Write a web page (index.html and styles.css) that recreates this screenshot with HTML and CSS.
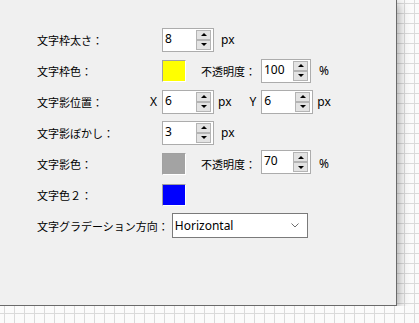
FILE: index.html
```html
<!DOCTYPE html>
<html lang="ja">

<head>
    <meta charset="UTF-8">
    <meta name="viewport" content="width=device-width, initial-scale=1.0">
    <title>文字設定</title>

    <link rel="stylesheet" href="styles.css">
</head>

<body>
    <div class="window">
        <div class="form">
            <div class="row">
                <span class="lbl">文字枠太さ：</span>
                <span class="axis"></span>
                <div class="spin"><span class="val">8</span><span class="btns"><i class="up"></i><i class="down"></i></span></div>
                <span class="unit">px</span>
            </div>

            <div class="row">
                <span class="lbl">文字枠色：</span>
                <span class="axis"></span>
                <span class="swatch yellow"></span>
                <span class="lbl2">不透明度：</span>
                <div class="spin narrow"><span class="val">100</span><span class="btns"><i class="up"></i><i class="down"></i></span></div>
                <span class="unit pct">%</span>
            </div>

            <div class="row">
                <span class="lbl">文字影位置：</span>
                <span class="axis">X</span>
                <div class="spin"><span class="val">6</span><span class="btns"><i class="up"></i><i class="down"></i></span></div>
                <span class="unit tight">px</span>
                <span class="axis-y">Y</span>
                <div class="spin"><span class="val">6</span><span class="btns"><i class="up"></i><i class="down"></i></span></div>
                <span class="unit tight">px</span>
            </div>

            <div class="row">
                <span class="lbl">文字影ぼかし：</span>
                <span class="axis"></span>
                <div class="spin"><span class="val">3</span><span class="btns"><i class="up"></i><i class="down"></i></span></div>
                <span class="unit">px</span>
            </div>

            <div class="row">
                <span class="lbl">文字影色：</span>
                <span class="axis"></span>
                <span class="swatch gray"></span>
                <span class="lbl2">不透明度：</span>
                <div class="spin narrow up2"><span class="val">70</span><span class="btns"><i class="up"></i><i class="down"></i></span></div>
                <span class="unit pct">%</span>
            </div>

            <div class="row">
                <span class="lbl">文字色２：</span>
                <span class="axis"></span>
                <span class="swatch blue"></span>
            </div>

            <div class="row">
                <span class="lbl auto">文字グラデーション方向：</span>
                <div class="select">
                    <span>Horizontal</span>
                    <svg width="8" height="5" viewBox="0 0 8 5"><polyline points="0.5,0.5 4,4 7.5,0.5" fill="none" stroke="#6d6d6d" stroke-width="1"/></svg>
                </div>
            </div>
        </div>
    </div>
</body>

</html>
```

FILE: styles.css
```css
* {
    padding: 0;
    margin: 0;
    box-sizing: border-box;
}

html {
    background-color: #fbfbfb;
    background-image:
        linear-gradient(to right, #dadada 1px, transparent 1px),
        linear-gradient(to bottom, #dadada 1px, transparent 1px);
    background-size: 10px 10px;
    background-position: 4px 3px;
}

body {
    font-family: "Noto Sans", "Noto Sans CJK JP", sans-serif;
    font-size: 12px;
    color: #000;
}

.window {
    width: 397px;
    height: 306px;
    background-color: #f0f0f0;
    border-right: 1px solid #6a6a6a;
    border-bottom: 1px solid #6a6a6a;
    box-shadow: 2px 3px 10px rgba(0, 0, 0, 0.35);
}

.form {
    padding: 24px 0 0 37px;
}

.row {
    height: 31px;
    display: flex;
    align-items: center;
}

.lbl,
.lbl2 {
    font-family: "Noto Sans CJK JP", sans-serif;
    font-size: 11px;
    white-space: nowrap;
}

.lbl {
    width: 113px;
}

.lbl.auto {
    width: auto;
    margin-right: 3px;
}

.lbl2 {
    margin: 0 5px 0 15px;
}

.axis {
    width: 12px;
}

.axis-y {
    margin: 0 5px 0 18px;
}

.spin {
    width: 52px;
    height: 24px;
    background: white;
    border: 1px solid #acacac;
    display: flex;
    padding: 1px;
}

.spin.narrow {
    width: 50px;
}

.spin.up2 {
    margin-top: -3px;
}

.spin .val {
    flex: 1;
    padding: 1px 0 0 1px;
    line-height: 15px;
}

.btns {
    width: 15px;
    display: flex;
    flex-direction: column;
    margin-right: 1px;
}

.btns i {
    height: 10px;
    background: #e3e3e3;
    border: 1px solid #b4b4b4;
    display: flex;
    align-items: center;
    justify-content: center;
}

.btns i::before {
    content: "";
    border-left: 3px solid transparent;
    border-right: 3px solid transparent;
}

.btns .up::before {
    border-bottom: 3px solid #000;
}

.btns .down::before {
    border-top: 3px solid #000;
}

.unit {
    margin-left: 7px;
}

.unit.tight {
    margin-left: 4px;
}

.unit.pct {
    margin-left: 8px;
}

.swatch {
    width: 24px;
    height: 22px;
    border-top: 1px solid #a0a0a0;
    border-left: 1px solid #a0a0a0;
    border-right: 1px solid #fff;
    border-bottom: 1px solid #fff;
    margin-top: 1px;
}

.swatch.yellow {
    background: #ffff00;
}

.swatch.gray {
    background: #a3a3a3;
}

.swatch.blue {
    background: #0000ff;
}

.select {
    width: 136px;
    height: 25px;
    background: white;
    border: 1px solid #7a7a7a;
    display: flex;
    align-items: center;
    justify-content: space-between;
    padding: 0 8px 0 2px;
}
```
